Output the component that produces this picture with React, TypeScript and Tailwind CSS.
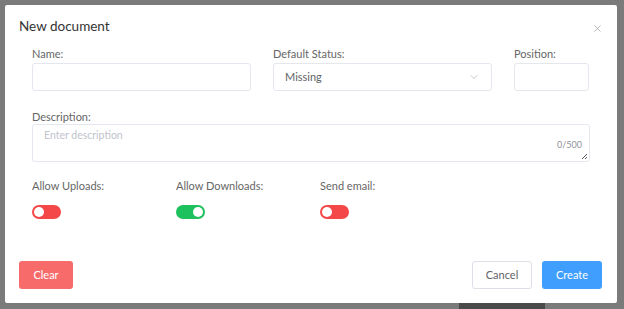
import { ChevronDown, X } from "lucide-react";

function Toggle({ on }: { on: boolean }) {
  return (
    <div
      className={`w-[29px] h-[14px] rounded-full flex items-center px-[2px] ${
        on ? "bg-[#1dc15e] justify-end" : "bg-[#f44747] justify-start"
      }`}
    >
      <div className="w-[10px] h-[10px] rounded-full bg-white"></div>
    </div>
  );
}

export default function App() {
  return (
    <div
      className="w-[624px] h-[309px] bg-[#7b7b7b] relative overflow-hidden"
      style={{ fontFamily: "Lato, 'Open Sans', sans-serif" }}
    >
      {/* fondo detrás del modal */}
      <div className="absolute left-[459px] top-[303px] w-[86px] h-[10px] bg-[#4a4a4a]"></div>

      {/* MODAL */}
      <div className="absolute left-[5px] top-[5px] w-[612px] h-[298px] bg-white rounded-[2px] flex flex-col">
        <div className="flex items-start justify-between pl-[14px] pr-[14px] pt-[12px]">
          <h2 className="text-[13.5px] leading-[18px] text-[#333]">New document</h2>
          <X size={11} strokeWidth={1.5} className="text-[#9a9a9a] mt-[6px]" />
        </div>

        <div className="px-[27px] pt-[12px]">
          <div className="flex gap-[22px]">
            <div className="w-[219px]">
              <label className="block text-[11px] leading-[14px] text-[#666] mb-[2px]">Name:</label>
              <div className="h-[28px] border border-[#e4e7ed] rounded-[3px]"></div>
            </div>
            <div className="w-[219px]">
              <label className="block text-[11px] leading-[14px] text-[#666] mb-[2px]">Default Status:</label>
              <div className="h-[28px] border border-[#e4e7ed] rounded-[3px] flex items-center justify-between px-[11px]">
                <span className="text-[11px] text-[#606266]">Missing</span>
                <ChevronDown size={12} strokeWidth={1.5} className="text-[#b0b3b8]" />
              </div>
            </div>
            <div className="w-[75px]">
              <label className="block text-[11px] leading-[14px] text-[#666] mb-[2px]">Position:</label>
              <div className="h-[28px] border border-[#e4e7ed] rounded-[3px]"></div>
            </div>
          </div>

          <div className="mt-[19px]">
            <label className="block text-[11px] leading-[14px] text-[#666]">Description:</label>
            <div className="h-[38px] border border-[#e4e7ed] rounded-[3px] relative px-[11px] pt-[2px]">
              <span className="block text-[10.5px] leading-[16px] text-[#c0c4cc]">Enter description</span>
              <span className="absolute right-[7px] top-[14px] text-[9px] leading-[12px] text-[#909399]">0/500</span>
              <svg className="absolute right-[1px] bottom-[1px]" width="7" height="7" viewBox="0 0 7 7">
                <path d="M6 1 L1 6 M6 4 L4 6" stroke="#555" strokeWidth="1" />
              </svg>
            </div>
          </div>

          <div className="flex mt-[17px]">
            <div className="w-[144px]">
              <label className="block text-[11px] leading-[14px] text-[#666] mb-[12px]">Allow Uploads:</label>
              <Toggle on={false} />
            </div>
            <div className="w-[144px]">
              <label className="block text-[11px] leading-[14px] text-[#666] mb-[12px]">Allow Downloads:</label>
              <Toggle on={true} />
            </div>
            <div className="w-[144px]">
              <label className="block text-[11px] leading-[14px] text-[#666] mb-[12px]">Send email:</label>
              <Toggle on={false} />
            </div>
          </div>
        </div>

        {/* BOTONES */}
        <div className="mt-auto flex items-center justify-between pl-[14px] pr-[15px] pb-[14px]">
          <button className="w-[54px] h-[28px] rounded-[3px] bg-[#f76b6b] text-white text-[11px]">
            Clear
          </button>
          <div className="flex gap-[10px]">
            <button className="w-[60px] h-[28px] rounded-[3px] border border-[#dcdfe6] bg-white text-[#606266] text-[11px]">
              Cancel
            </button>
            <button className="w-[60px] h-[28px] rounded-[3px] bg-[#409eff] text-white text-[11px]">
              Create
            </button>
          </div>
        </div>
      </div>
    </div>
  );
}
